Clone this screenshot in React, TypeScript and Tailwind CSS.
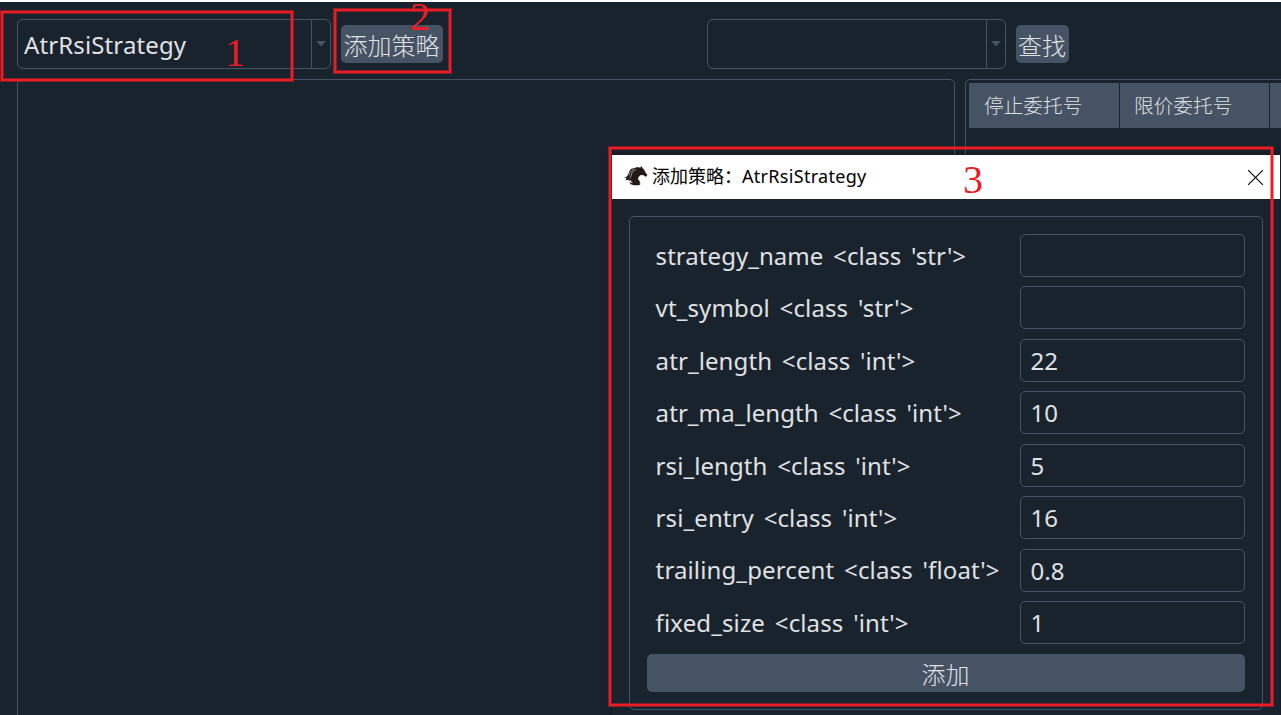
type Field = { label: string; value: string; tracking: string };

const fields: Field[] = [
  { label: "strategy_name <class 'str'>", value: "", tracking: "tracking-[0.05px]" },
  { label: "vt_symbol <class 'str'>", value: "", tracking: "tracking-[0.12px]" },
  { label: "atr_length <class 'int'>", value: "22", tracking: "tracking-[0.1px]" },
  { label: "atr_ma_length <class 'int'>", value: "10", tracking: "tracking-[0.08px]" },
  { label: "rsi_length <class 'int'>", value: "5", tracking: "tracking-[0.08px]" },
  { label: "rsi_entry <class 'int'>", value: "16", tracking: "tracking-[0.1px]" },
  { label: "trailing_percent <class 'float'>", value: "0.8", tracking: "tracking-[0.13px]" },
  { label: "fixed_size <class 'int'>", value: "1", tracking: "tracking-[0.13px]" },
];

function Combo({ text, className }: { text: string; className: string }) {
  return (
    <div className={`flex h-[50px] shrink-0 rounded-md border border-[#455364] ${className}`}>
      <div className="flex flex-1 items-center pt-px pl-[6px] text-[24px] leading-none tracking-[0.12px]">{text}</div>
      <div className="flex w-[19px] items-center justify-center border-l border-[#455364]">
        <svg width="10" height="6" viewBox="0 0 10 6" className="fill-[#455364]">
          <path d="M0 0H10L5 5.5Z" />
        </svg>
      </div>
    </div>
  );
}

function HorseLogo() {
  return (
    <svg width="24" height="20" viewBox="0 0 72 60" className="mb-[2px] fill-[#231815]">
      <path d="M54 0 55 7C60 9 62 13 63 17L70 26 68 31 64 32 59 28 51 27C46 30 42 34 42 38 43 43 49 46 49 49L46 51 50 54 45 58 30 58C22 57 18 53 16 49L27 51 21 46 20 41 15 46 14 41 4 43 8 37 0 34C8 34 11 30 13 24 15 15 20 8 28 6L26 10C33 4 41 3 48 5Z" />
      <path
        d="M36 10C27 14 23 20 22 28L17 37M28 10C21 14 17 20 15 28"
        className="fill-none stroke-white"
        strokeWidth="1.6"
      />
    </svg>
  );
}

export default function App() {
  return (
    <div className="relative flex h-[715px] w-[1281px] flex-col overflow-hidden border-t-2 border-white bg-[#19232d] font-['Noto_Sans','Noto_Sans_CJK_SC',sans-serif] text-[#e0e1e3]">
      <div className="flex h-[77px] shrink-0 items-start pt-[17px] pl-[17px]">
        <Combo text="AtrRsiStrategy" className="w-[314px]" />
        <button className="mt-[6px] ml-[10px] h-[38px] w-[102px] shrink-0 rounded-[5px] bg-[#455364] pt-px pr-px font-['Noto_Sans_CJK_SC',sans-serif] text-[24px] leading-[38px] font-light whitespace-nowrap">
          添加策略
        </button>
        <Combo text="" className="ml-[264px] w-[299px]" />
        <button className="mt-[6px] ml-[10px] h-[38px] w-[53px] shrink-0 rounded-[5px] bg-[#455364] pt-px pr-px font-['Noto_Sans_CJK_SC',sans-serif] text-[24px] leading-[38px] font-light whitespace-nowrap">
          查找
        </button>
      </div>

      <div className="flex h-[650px] shrink-0 gap-[10px] pl-[17px]">
        <div className="w-[938px] shrink-0 rounded-[5px] border border-[#455364]" />
        <div className="w-[420px] shrink-0 rounded-[5px] border border-[#455364] pt-[3px] pl-[3px]">
          <div className="flex h-[45px] gap-px font-['Noto_Sans_CJK_SC',sans-serif] text-[19.7px] leading-[43px] font-light">
            <div className="w-[150px] shrink-0 bg-[#455364] pl-[15px]">停止委托号</div>
            <div className="w-[149px] shrink-0 bg-[#455364] pl-[14px]">限价委托号</div>
            <div className="w-[100px] shrink-0 bg-[#455364]" />
          </div>
        </div>
      </div>

      <div className="absolute top-[153px] left-[612px] flex h-[562px] w-[668px] flex-col bg-[#19232d] shadow-[0_0_8px_rgba(0,0,0,0.4)]">
        <div className="flex h-[44px] shrink-0 items-center bg-white pr-[17px] pl-[12px] text-black">
          <HorseLogo />
          <span className="mb-[2px] ml-[4px] text-[18px] whitespace-nowrap">
            <span className="font-['Noto_Sans_CJK_SC',sans-serif]">添加策略：</span>
            <span className="tracking-[0.3px]">AtrRsiStrategy</span>
          </span>
          <svg width="15" height="15" viewBox="0 0 15 15" className="ml-auto stroke-black">
            <path d="M0 0 15 15M15 0 0 15" strokeWidth="1.1" />
          </svg>
        </div>
        <div className="mt-[17px] ml-[17px] flex h-[494px] w-[634px] flex-col rounded-[5px] border border-[#455364] px-[17px] pt-[17px]">
          <div className="flex flex-col gap-[9.45px]">
            {fields.map((f) => (
              <div key={f.label} className="flex h-[43px] items-center">
                <span
                  className={`w-[373px] shrink-0 pt-[0.6px] pl-[8.6px] text-[24px] whitespace-nowrap [word-spacing:3.4px] ${f.tracking}`}
                >
                  {f.label}
                </span>
                <div className="flex h-[43px] w-[225px] shrink-0 items-center rounded-[5px] border border-[#455364] pt-px pl-[9.5px] text-[24px]">
                  {f.value}
                </div>
              </div>
            ))}
          </div>
          <button className="mt-[10px] h-[38px] w-[598px] rounded-[5px] bg-[#455364] pt-px pr-px font-['Noto_Sans_CJK_SC',sans-serif] text-[24px] leading-[38px] font-light">
            添加
          </button>
        </div>
      </div>

      <div className="absolute top-[9px] left-px h-[70px] w-[292px] border-2 border-[#ed1c24] shadow-[0_0_0_1px_rgba(237,28,36,0.5),inset_0_0_0_1px_rgba(237,28,36,0.5)]" />
      <div className="absolute top-[7px] left-[334px] h-[64px] w-[117px] border-2 border-[#ed1c24] shadow-[0_0_0_1px_rgba(237,28,36,0.5),inset_0_0_0_1px_rgba(237,28,36,0.5)]" />
      <div className="absolute top-[145px] left-[609px] h-[559px] w-[664px] border-2 border-[#ed1c24] shadow-[0_0_0_1px_rgba(237,28,36,0.5),inset_0_0_0_1px_rgba(237,28,36,0.5)]" />
      <span className="absolute top-[31px] left-[225px] font-['Liberation_Serif',serif] text-[40px] leading-[40px] text-[#ed1c24]">1</span>
      <span className="absolute top-[-5px] left-[410px] font-['Liberation_Serif',serif] text-[40px] leading-[40px] text-[#ed1c24]">2</span>
      <span className="absolute top-[158px] left-[963px] font-['Liberation_Serif',serif] text-[40px] leading-[40px] text-[#ed1c24]">3</span>
    </div>
  );
}
